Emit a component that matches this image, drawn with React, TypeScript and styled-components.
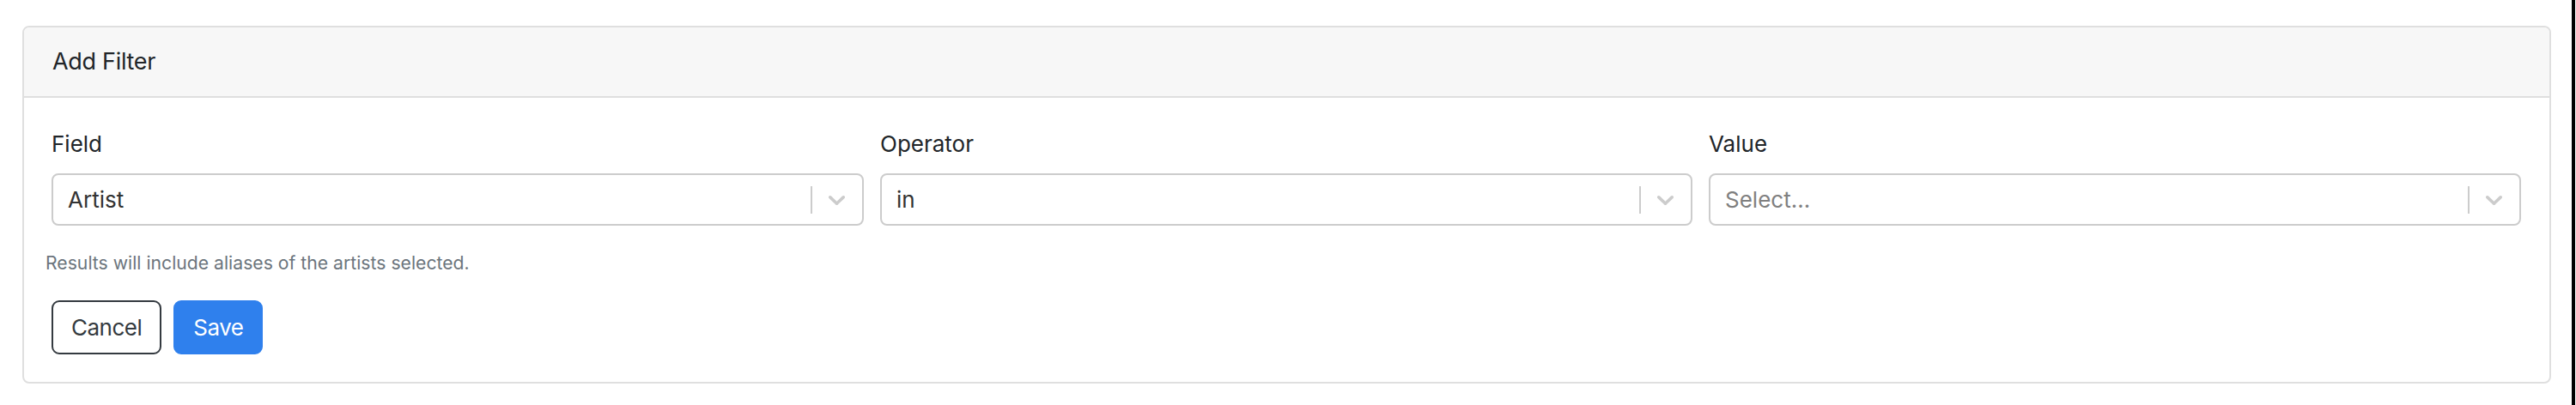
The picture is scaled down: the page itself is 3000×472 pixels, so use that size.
import React from "react";
import styled, { createGlobalStyle } from "styled-components";

const GlobalStyle = createGlobalStyle`
  html, body {
    margin: 0;
    padding: 0;
    background: #fff;
  }

  body {
    font-family: Inter, "Liberation Sans", Arial, sans-serif;
    color: #212529;
  }

  * {
    box-sizing: border-box;
  }
`;

const Page = styled.div`
  width: 2999px;
  min-height: 100vh;
  padding: 30px 24px 0 26px;
  border-right: 4px solid #000;
`;

const Card = styled.div`
  border: 2px solid #dfdfdf;
  border-radius: 8px;
  overflow: hidden;
`;

const CardHeader = styled.div`
  background: #f7f7f7;
  border-bottom: 2px solid #dfdfdf;
  padding: 20px 33px;
  font-size: 27px;
  line-height: 40px;
  letter-spacing: -0.3px;
  color: #212529;
`;

const CardBody = styled.div`
  padding: 34px 33px 32px 32px;
`;

const FieldGrid = styled.div`
  display: grid;
  grid-template-columns: repeat(3, 1fr);
  gap: 19px;
`;

const FieldGroup = styled.div`
  display: flex;
  flex-direction: column;
`;

const Label = styled.label`
  font-size: 26px;
  line-height: 39px;
  margin-bottom: 15px;
  color: #212529;
`;

const SelectControl = styled.div`
  display: flex;
  align-items: center;
  height: 61px;
  border: 2px solid #ccc;
  border-radius: 8px;
  background: #fff;
`;

const SelectValue = styled.div<{ $placeholder?: boolean }>`
  flex: 1;
  padding-left: 17px;
  font-size: 26px;
  color: ${(p) => (p.$placeholder ? "#808080" : "#333")};
  white-space: nowrap;
`;

const Separator = styled.span`
  width: 2px;
  height: 32px;
  background: #ccc;
`;

const Indicator = styled.div`
  display: flex;
  align-items: center;
  padding: 0 13px 0 12px;
  color: #ccc;

  svg {
    width: 33px;
    height: 33px;
    fill: currentColor;
  }
`;

const HelpText = styled.div`
  margin: 28px 0 28px -7px;
  font-size: 21.2px;
  line-height: 31px;
  color: #6c757d;
`;

const ButtonRow = styled.div`
  display: flex;
  gap: 14px;
`;

const Button = styled.button<{ $variant: "outline" | "primary" }>`
  height: 63px;
  padding: 0 21px;
  border-radius: 9px;
  font-family: inherit;
  font-size: 26px;
  letter-spacing: -0.5px;
  border: 2px solid
    ${(p) => (p.$variant === "primary" ? "#2f80ed" : "#343a40")};
  background: ${(p) => (p.$variant === "primary" ? "#2f80ed" : "#fff")};
  color: ${(p) => (p.$variant === "primary" ? "#fff" : "#343a40")};
  cursor: pointer;
`;

const Chevron = () => (
  <svg viewBox="0 0 20 20" aria-hidden="true">
    <path d="M4.516 7.548c0.436-0.446 1.043-0.481 1.576 0l3.908 3.747 3.908-3.747c0.533-0.481 1.141-0.446 1.574 0 0.436 0.445 0.408 1.197 0 1.615-0.406 0.418-4.695 4.502-4.695 4.502-0.217 0.223-0.502 0.335-0.787 0.335s-0.57-0.112-0.789-0.335c0 0-4.287-4.084-4.695-4.502s-0.436-1.17 0-1.615z" />
  </svg>
);

const fields = [
  { label: "Field", value: "Artist" },
  { label: "Operator", value: "in" },
  { label: "Value", value: "" },
];

const App = () => {
  return (
    <>
      <GlobalStyle />
      <Page>
        <Card>
          <CardHeader>Add Filter</CardHeader>
          <CardBody>
            <FieldGrid>
              {fields.map((f) => (
                <FieldGroup key={f.label}>
                  <Label>{f.label}</Label>
                  <SelectControl>
                    <SelectValue $placeholder={!f.value}>
                      {f.value || "Select..."}
                    </SelectValue>
                    <Separator />
                    <Indicator>
                      <Chevron />
                    </Indicator>
                  </SelectControl>
                </FieldGroup>
              ))}
            </FieldGrid>
            <HelpText>Results will include aliases of the artists selected.</HelpText>
            <ButtonRow>
              <Button $variant="outline">Cancel</Button>
              <Button $variant="primary">Save</Button>
            </ButtonRow>
          </CardBody>
        </Card>
      </Page>
    </>
  );
};

export default App;
